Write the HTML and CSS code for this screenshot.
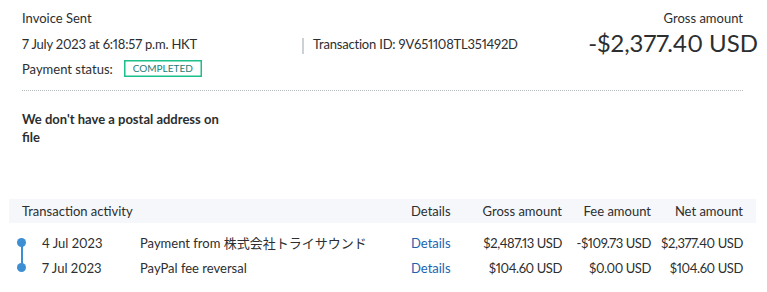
FILE: index.html
```html
<!DOCTYPE html>
<html lang="en">

<head>
    <meta charset="UTF-8">
    <meta name="viewport" content="width=device-width, initial-scale=1.0">
    <title>Transaction details</title>
    <link rel="stylesheet" href="styles.css">
</head>

<body>
    <div class="page">
        <div class="summary">
            <div class="summary-left">
                <div class="title">Invoice Sent</div>
                <div class="meta-row">
                    <span class="date">7 July 2023 at 6:18:57 p.m. HKT</span>
                    <span class="txn-id">Transaction ID: 9V651108TL351492D</span>
                </div>
                <div class="status-row">
                    <span>Payment status:</span>
                    <span class="badge">COMPLETED</span>
                </div>
            </div>
            <div class="summary-right">
                <div class="gross-label">Gross amount</div>
                <div class="gross-value">-$2,377.40 USD</div>
            </div>
        </div>

        <div class="address">We don't have a postal address on file</div>
    </div>

    <table class="activity">
        <colgroup>
            <col class="w-line">
            <col class="w-date">
            <col class="w-desc">
            <col class="w-details">
            <col class="w-gross">
            <col class="w-fee">
            <col class="w-net">
        </colgroup>
        <thead>
            <tr>
                <th class="col-name" colspan="3">Transaction activity</th>
                <th>Details</th>
                <th class="num">Gross amount</th>
                <th class="num">Fee amount</th>
                <th class="num">Net amount</th>
            </tr>
        </thead>
        <tbody>
            <tr>
                <td class="timeline first"><span class="dot"></span></td>
                <td>4 Jul 2023</td>
                <td>Payment from 株式会社トライサウンド</td>
                <td><a href="#" class="link">Details</a></td>
                <td class="num">$2,487.13 USD</td>
                <td class="num">-$109.73 USD</td>
                <td class="num">$2,377.40 USD</td>
            </tr>
            <tr>
                <td class="timeline"><span class="dot"></span></td>
                <td>7 Jul 2023</td>
                <td>PayPal fee reversal</td>
                <td><a href="#" class="link">Details</a></td>
                <td class="num">$104.60 USD</td>
                <td class="num">$0.00 USD</td>
                <td class="num">$104.60 USD</td>
            </tr>
        </tbody>
    </table>
</body>

</html>
```

FILE: styles.css
```css
body {
    margin: 0;
    font-family: Lato, "Noto Sans CJK JP", sans-serif;
    font-size: 13px;
    font-variant-numeric: proportional-nums;
    color: #2c2e2f;
    background: #fff;
}

.page {
    padding: 0 24px 0 22px;
}

.summary {
    display: flex;
    justify-content: space-between;
    padding-top: 9px;
    padding-bottom: 12px;
    border-bottom: 1px dotted #b7bcbf;
}

.summary-left {
    display: flex;
    flex-direction: column;
}

.title {
    height: 19px;
    line-height: 19px;
}

.meta-row {
    margin-top: 7px;
    height: 19px;
    line-height: 19px;
    display: flex;
    letter-spacing: -0.2px;
}

.date {
    width: 280px;
}

.txn-id {
    border-left: 2px solid #cbd2d6;
    padding-left: 9px;
    line-height: 13px;
    margin-top: 3px;
}

.status-row {
    margin-top: 5px;
    display: flex;
    align-items: center;
    gap: 11px;
    height: 19px;
}

.badge {
    border: 1px solid #1bc08a;
    box-shadow: inset 0 0 0 0.5px #1bc08a;
    color: #1f7c79;
    font-size: 10px;
    padding: 2px 8px;
    line-height: 11px;
}

.summary-right {
    text-align: right;
}

.gross-label {
    height: 19px;
    line-height: 19px;
}

.gross-value {
    font-size: 24px;
    line-height: 30px;
    margin-right: -15px;
}

.address {
    font-weight: bold;
    width: 210px;
    line-height: 18px;
    margin-top: 19px;
}

.activity {
    margin: 53px 11px 0 9px;
    width: 747px;
    table-layout: fixed;
    border-collapse: collapse;
}

.w-line { width: 33px; }
.w-date { width: 98px; }
.w-desc { width: 271px; }
.w-details { width: 40px; }
.w-gross { width: 111px; }
.w-fee { width: 89px; }
.w-net { width: 105px; }

.activity th {
    background: #f5f7fa;
    font-weight: normal;
    text-align: left;
    height: 24px;
    padding: 0;
    white-space: nowrap;
}

.activity th.col-name {
    padding-left: 13px;
}

.activity td {
    padding: 0;
    height: 25px;
    white-space: nowrap;
}

.activity td.num {
    letter-spacing: -0.4px;
}

.activity tbody tr:first-child td {
    padding-top: 7px;
}

.activity .num {
    text-align: right;
}

.activity th.num:last-child,
.activity td.num:last-child {
    padding-right: 13px;
}

.timeline {
    position: relative;
}

.dot {
    display: block;
    width: 9px;
    height: 9px;
    border-radius: 50%;
    background: #3d8fd4;
    margin-left: 8px;
    position: relative;
    z-index: 1;
}

.timeline.first::after {
    content: "";
    position: absolute;
    left: 12px;
    top: 18px;
    width: 2px;
    height: 25px;
    background: #3d8fd4;
}

.link {
    color: #1a64b0;
    text-decoration: none;
}
```
